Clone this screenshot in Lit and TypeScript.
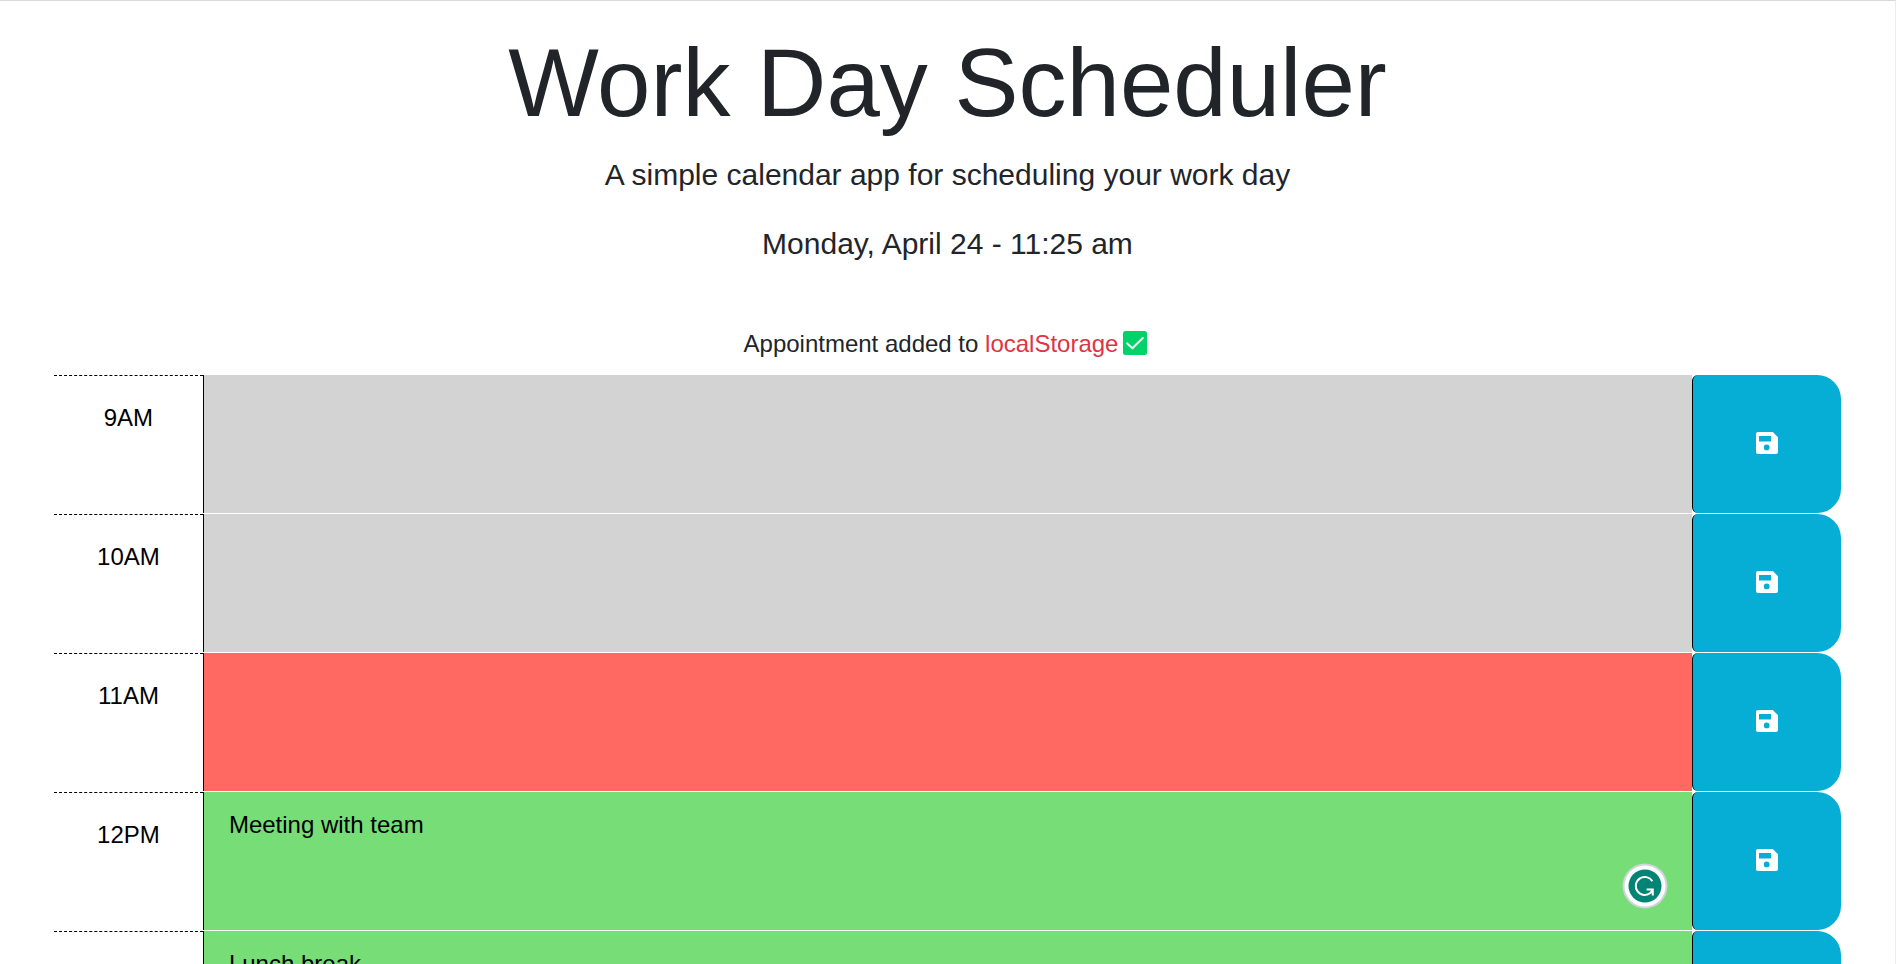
import { LitElement, html, css, svg, nothing } from "lit";
import { customElement, property } from "lit/decorators.js";
import { classMap } from "lit/directives/class-map.js";

type Phase = "past" | "present" | "future";

interface Slot {
  hour: string;
  phase: Phase;
  note: string;
  assistant?: boolean;
}

const SLOTS: Slot[] = [
  { hour: "9AM", phase: "past", note: "" },
  { hour: "10AM", phase: "past", note: "" },
  { hour: "11AM", phase: "present", note: "" },
  { hour: "12PM", phase: "future", note: "Meeting with team", assistant: true },
  { hour: "1PM", phase: "future", note: "Lunch break" },
];

const saveIcon = html`<svg class="icon" viewBox="0 0 22 22" aria-hidden="true">
  ${svg`<path fill="#fff" fill-rule="evenodd" d="M2 0H16.8L22 5.2V20A2 2 0 0 1 20 22H2A2 2 0 0 1 0 20V2A2 2 0 0 1 2 0ZM3 4V9.4H15V4ZM10.7 12.5A2.9 2.9 0 1 0 10.7 18.3A2.9 2.9 0 1 0 10.7 12.5Z"/>`}
</svg>`;

@customElement("time-block")
export class TimeBlock extends LitElement {
  @property({ attribute: false }) slotData!: Slot;

  static styles = css`
    :host {
      display: block;
    }
    .row {
      display: grid;
      grid-template-columns: 1fr 10fr 1fr;
      height: 139px;
      font: 24px/36px "Liberation Sans", Arial, sans-serif;
      color: #000;
    }
    .hour {
      border-top: 1px dashed #000;
      padding-top: 24px;
      text-align: center;
    }
    .note {
      box-sizing: border-box;
      display: block;
      width: 100%;
      height: 138px;
      margin: 0;
      padding: 15px 25px;
      border: 0;
      border-left: 1px solid #000;
      border-radius: 0;
      outline: 0;
      resize: none;
      overflow: hidden;
      font: inherit;
      color: #000;
    }
    .past {
      background: #d3d3d3;
    }
    .present {
      background: #ff6961;
    }
    .future {
      background: #77dd77;
    }
    .middle {
      position: relative;
    }
    .save {
      display: flex;
      align-items: center;
      justify-content: center;
      box-sizing: border-box;
      height: 138px;
      width: 100%;
      margin: 0;
      padding: 0 0 2px;
      border: 0;
      border-left: 1px solid #000;
      border-radius: 6px 24px 24px 6px;
      background: #06aed5;
      cursor: pointer;
    }
    .icon {
      display: block;
      width: 22px;
      height: 22px;
    }
    .assistant {
      position: absolute;
      right: 24px;
      bottom: 22px;
      width: 46px;
      height: 46px;
      padding: 0;
      border: 0;
      background: none;
    }
    .assistant svg {
      display: block;
    }
  `;

  render() {
    const { hour, phase, note, assistant } = this.slotData;
    return html`<div class="row">
      <label class="hour" for="note">${hour}</label>
      <div class="middle">
        <textarea
          id="note"
          spellcheck="false"
          class=${classMap({ note: true, [phase]: true })}
          .value=${note}
        ></textarea>
        ${assistant
          ? html`<button class="assistant" aria-label="Writing assistant">
              <svg width="46" height="46" viewBox="0 0 46 46">
                <circle cx="23" cy="23" r="22.5" fill="#d0d5dc" />
                <circle cx="23" cy="23" r="20.5" fill="#fff" />
                <circle cx="23" cy="23" r="16.5" fill="#028475" />
                <path
                  d="M30.4 18.2A9 9 0 1 0 28.6 29.8L30.6 26.8M24.6 26.6H30.8V32.4"
                  fill="none"
                  stroke="#fff"
                  stroke-width="2"
                />
              </svg>
            </button>`
          : nothing}
      </div>
      <div>
        <button class="save" aria-label="Save ${hour}">${saveIcon}</button>
      </div>
    </div>`;
  }
}

@customElement("app-root")
export class AppRoot extends LitElement {
  static styles = css`
    :host {
      display: block;
      box-sizing: border-box;
      height: 100vh;
      overflow-y: auto;
      scrollbar-width: none;
      border-top: 1px solid #d9d9d9;
      border-right: 1px solid #ececec;
      background: #fff;
      color: #212529;
      font-family: "Liberation Sans", Arial, sans-serif;
    }
    .header {
      padding-top: 24px;
      text-align: center;
    }
    .title {
      margin: 0;
      font-size: 96px;
      font-weight: 400;
      line-height: 116px;
    }
    .lead {
      margin: 0 0 24px;
      padding-top: 11px;
      font-size: 30px;
      line-height: 45px;
    }
    .lead + .lead {
      padding-top: 0;
    }
    .message {
      display: flex;
      align-items: center;
      justify-content: center;
      margin: 0;
      padding: 36px 0 13px;
      font-size: 24px;
      line-height: 36px;
    }
    .message code {
      font: inherit;
      color: #dc3545;
    }
    .words {
      white-space: pre;
    }
    .check {
      display: block;
      margin: 0 4px 2px 5px;
    }
    .schedule {
      padding: 0 54px;
    }
  `;

  render() {
    return html`
      <header class="header">
        <h1 class="title">Work Day Scheduler</h1>
        <p class="lead">A simple calendar app for scheduling your work day</p>
        <p class="lead">Monday, April 24 - 11:25 am</p>
      </header>
      <p class="message" role="status">
        <span class="words">Appointment added to <code>localStorage</code></span>
        <svg class="check" width="24" height="24" viewBox="0 0 24 24" role="img" aria-label="Done">
          <rect width="24" height="24" rx="2.5" fill="#00d26a" />
          <path d="M4.2 12.4L9.4 17.3L19.8 7" fill="none" stroke="#f4f4f4" stroke-width="2.1" stroke-linecap="round" stroke-linejoin="round" />
        </svg>
      </p>
      <main class="schedule">
        ${SLOTS.map((s) => html`<time-block .slotData=${s}></time-block>`)}
      </main>
    `;
  }
}
